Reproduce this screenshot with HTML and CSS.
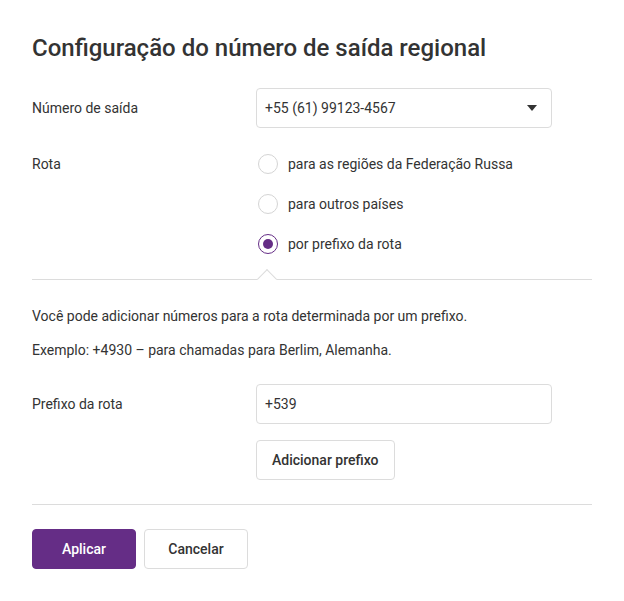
FILE: index.html
```html
<!DOCTYPE html>
<html lang="pt">
<head>
<meta charset="utf-8">
<link rel="stylesheet" href="styles.css">
</head>
<body>
<div class="panel">
  <h1 class="title">Configuração do número de saída regional</h1>
  <div class="row">
    <div class="label">Número de saída</div>
    <div class="control">
      <div class="select">
        <span>+55 (61) 99123-4567</span>
        <svg class="caret" width="10" height="6" viewBox="0 0 10 6"><path d="M0 0H10L5 6Z" fill="#333"/></svg>
      </div>
    </div>
  </div>
  <div class="row route">
    <div class="label radio-label">Rota</div>
    <div class="control radios">
      <label class="radio"><span class="dot"></span>para as regiões da Federação Russa</label>
      <label class="radio"><span class="dot"></span>para outros países</label>
      <label class="radio checked"><span class="dot"></span>por prefixo da rota</label>
    </div>
  </div>
  <div class="divider notch"></div>
  <p class="info first">Você pode adicionar números para a rota determinada por um prefixo.</p>
  <p class="info">Exemplo: +4930 – para chamadas para Berlim, Alemanha.</p>
  <div class="row prefix">
    <div class="label">Prefixo da rota</div>
    <div class="control">
      <div class="input">+539</div>
      <button class="btn">Adicionar prefixo</button>
    </div>
  </div>
  <div class="divider bottom"></div>
  <div class="actions">
    <button class="btn primary">Aplicar</button>
    <button class="btn wide">Cancelar</button>
  </div>
</div>
</body>
</html>
```
FILE: styles.css
```css
* { box-sizing: border-box; }
body {
  margin: 0;
  background: #fff;
  font-family: Roboto, "Noto Sans", sans-serif;
  color: #333;
  font-size: 14px;
}
.panel {
  width: 624px;
  padding: 34px 32px 0 32px;
}
.title {
  margin: 0 0 26px;
  font-size: 24px;
  font-weight: 500;
  line-height: 28px;
  color: #333;
}
.row {
  display: flex;
  align-items: flex-start;
}
.label {
  width: 224px;
  line-height: 40px;
  flex: none;
}
.control {
  width: 296px;
  display: flex;
  flex-direction: column;
  gap: 16px;
}
.select, .input {
  height: 40px;
  border: 1px solid #dcdcdc;
  border-radius: 4px;
  padding: 0 13px 0 8px;
  display: flex;
  align-items: center;
  justify-content: space-between;
}
.caret { margin-right: 1px; }
.route { margin-top: 16px; }
.radios { gap: 0; }
.radio {
  height: 40px;
  display: flex;
  align-items: center;
  gap: 10px;
}
.dot {
  width: 20px;
  height: 20px;
  border-radius: 50%;
  border: 1px solid #d4d4d4;
  margin-left: 2px;
  display: flex;
  align-items: center;
  justify-content: center;
}
.checked .dot { border-color: #652d86; }
.checked .dot::after {
  content: "";
  width: 10px;
  height: 10px;
  border-radius: 50%;
  background: #652d86;
}
.divider {
  height: 1px;
  background: #dcdcdc;
  position: relative;
}
.notch { margin-top: 15px; }
.notch::before {
  content: "";
  position: absolute;
  left: 228px;
  top: -7px;
  width: 13px;
  height: 13px;
  background: #fff;
  border-left: 1px solid #dcdcdc;
  border-top: 1px solid #dcdcdc;
  transform: rotate(45deg);
}
.info {
  margin: 14px 0 0;
  line-height: 20px;
}
.info.first { margin-top: 26px; }
.prefix { margin-top: 24px; }
.input { justify-content: flex-start; }
.btn {
  font-family: Roboto, "Noto Sans", sans-serif;
  font-size: 14px;
  font-weight: 500;
  color: #333;
  background: #fff;
  border: 1px solid #dcdcdc;
  border-radius: 4px;
  height: 40px;
  padding: 0 15px;
  align-self: flex-start;
  cursor: pointer;
}
.divider.bottom { margin-top: 24px; }
.actions {
  margin-top: 24px;
  display: flex;
  gap: 8px;
}
.actions .btn { width: 104px; padding: 0; }
.btn.primary {
  background: #652d86;
  border-color: #652d86;
  color: #fff;
}
```
